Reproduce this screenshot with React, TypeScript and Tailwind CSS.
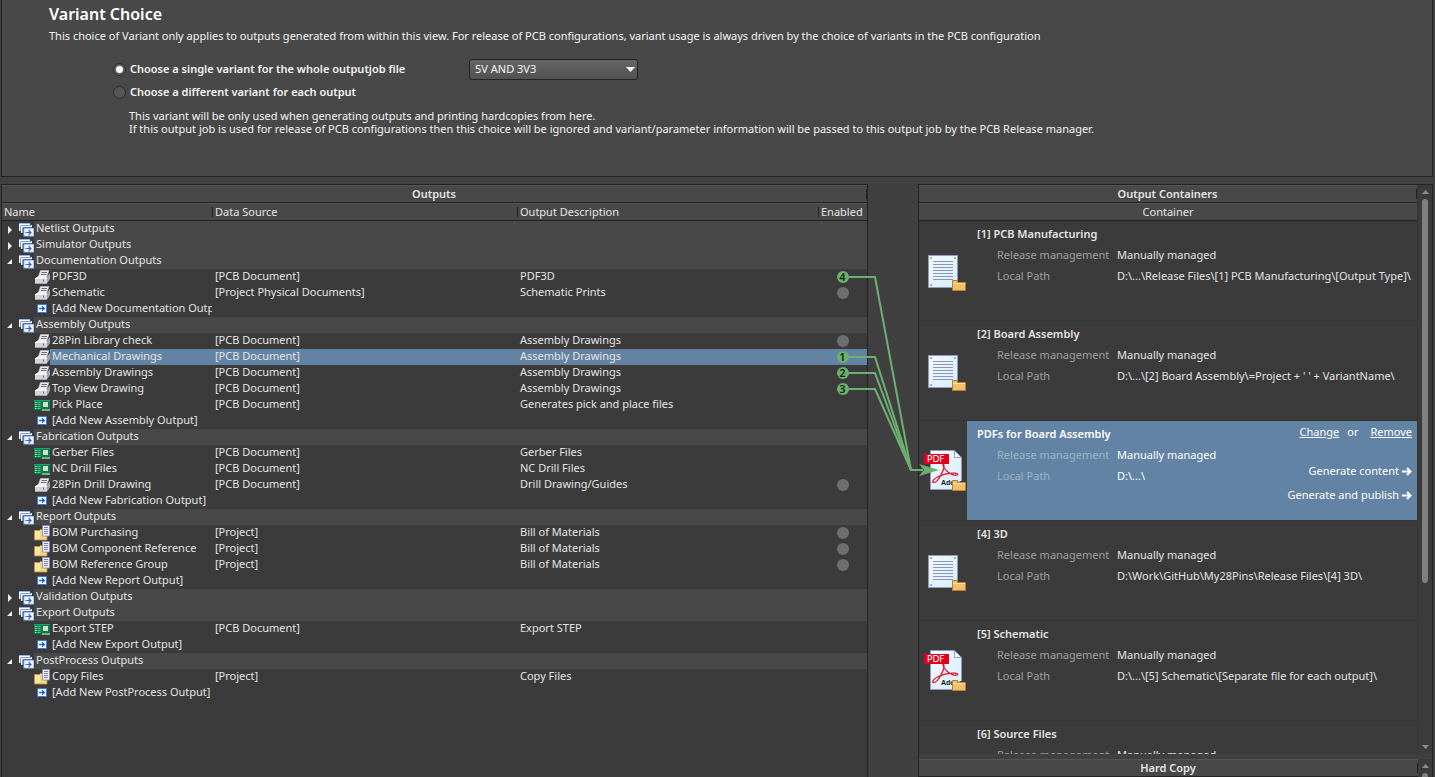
import { useState, type ReactNode } from "react";

type IconKind = "printer" | "board" | "report" | "add";

type OutputItem = {
  icon: IconKind;
  name: string;
  source?: string;
  description?: string;
  slot?: "idle" | 1 | 2 | 3 | 4;
  selected?: boolean;
};

type OutputGroup = { name: string; open: boolean; items: OutputItem[] };

const groups: OutputGroup[] = [
  { name: "Netlist Outputs", open: false, items: [] },
  { name: "Simulator Outputs", open: false, items: [] },
  {
    name: "Documentation Outputs",
    open: true,
    items: [
      { icon: "printer", name: "PDF3D", source: "[PCB Document]", description: "PDF3D", slot: 4 },
      { icon: "printer", name: "Schematic", source: "[Project Physical Documents]", description: "Schematic Prints", slot: "idle" },
      { icon: "add", name: "[Add New Documentation Output]" },
    ],
  },
  {
    name: "Assembly Outputs",
    open: true,
    items: [
      { icon: "printer", name: "28Pin Library check", source: "[PCB Document]", description: "Assembly Drawings", slot: "idle" },
      { icon: "printer", name: "Mechanical Drawings", source: "[PCB Document]", description: "Assembly Drawings", slot: 1, selected: true },
      { icon: "printer", name: "Assembly Drawings", source: "[PCB Document]", description: "Assembly Drawings", slot: 2 },
      { icon: "printer", name: "Top View Drawing", source: "[PCB Document]", description: "Assembly Drawings", slot: 3 },
      { icon: "board", name: "Pick Place", source: "[PCB Document]", description: "Generates pick and place files" },
      { icon: "add", name: "[Add New Assembly Output]" },
    ],
  },
  {
    name: "Fabrication Outputs",
    open: true,
    items: [
      { icon: "board", name: "Gerber Files", source: "[PCB Document]", description: "Gerber Files" },
      { icon: "board", name: "NC Drill Files", source: "[PCB Document]", description: "NC Drill Files" },
      { icon: "printer", name: "28Pin Drill Drawing", source: "[PCB Document]", description: "Drill Drawing/Guides", slot: "idle" },
      { icon: "add", name: "[Add New Fabrication Output]" },
    ],
  },
  {
    name: "Report Outputs",
    open: true,
    items: [
      { icon: "report", name: "BOM Purchasing", source: "[Project]", description: "Bill of Materials", slot: "idle" },
      { icon: "report", name: "BOM Component Reference", source: "[Project]", description: "Bill of Materials", slot: "idle" },
      { icon: "report", name: "BOM Reference Group", source: "[Project]", description: "Bill of Materials", slot: "idle" },
      { icon: "add", name: "[Add New Report Output]" },
    ],
  },
  { name: "Validation Outputs", open: false, items: [] },
  {
    name: "Export Outputs",
    open: true,
    items: [
      { icon: "board", name: "Export STEP", source: "[PCB Document]", description: "Export STEP" },
      { icon: "add", name: "[Add New Export Output]" },
    ],
  },
  {
    name: "PostProcess Outputs",
    open: true,
    items: [
      { icon: "report", name: "Copy Files", source: "[Project]", description: "Copy Files" },
      { icon: "add", name: "[Add New PostProcess Output]" },
    ],
  },
];

type Container = { title: string; path: string; kind: "folder" | "pdf"; selected?: boolean };

const containers: Container[] = [
  { title: "[1] PCB Manufacturing", path: "D:\\...\\Release Files\\[1] PCB Manufacturing\\[Output Type]\\", kind: "folder" },
  { title: "[2] Board Assembly", path: "D:\\...\\[2] Board Assembly\\=Project + ' ' + VariantName\\", kind: "folder" },
  { title: "PDFs for Board Assembly", path: "D:\\...\\", kind: "pdf", selected: true },
  { title: "[4] 3D", path: "D:\\Work\\GitHub\\My28Pins\\Release Files\\[4] 3D\\", kind: "folder" },
  { title: "[5] Schematic", path: "D:\\...\\[5] Schematic\\[Separate file for each output]\\", kind: "pdf" },
  { title: "[6] Source Files", path: "D:\\...\\", kind: "folder" },
];

function ExpandArrow({ open }: { open: boolean }) {
  return (
    <svg width="16" height="16" viewBox="0 0 16 16" className="block" fill="#f0f0f0" aria-hidden="true">
      {open ? <path d="M10 6v5H5z" /> : <path d="M6 5l4 4-4 4z" />}
    </svg>
  );
}

function GroupIcon() {
  return (
    <svg width="16" height="16" viewBox="0 0 16 16" className="block shrink-0" aria-hidden="true">
      <path d="M1 2h11v2H3v6H1z" fill="#fff" />
      <path d="M1 2.500h11" stroke="#8fb0f0" />
      <path d="M3 4h11v2H5v6H3z" fill="#fff" />
      <path d="M2.500 4.500V10M3 4.500h10" fill="none" stroke="#4a7ddc" strokeWidth=".8" />
      <path d="M4.500 6.500V12M5 6.500h9" fill="none" stroke="#4a7ddc" strokeWidth=".8" />
      <rect x="6" y="7.500" width="9.500" height="7.500" fill="#fff" stroke="#9dbaf3" />
      <path d="M7.500 11.500h5.500M10.500 9l2.500 2.500L10.500 14" fill="none" stroke="#2a66d8" strokeWidth="1.200" />
    </svg>
  );
}

function ItemIcon({ kind }: { kind: IconKind }) {
  return (
    <svg width="16" height="16" viewBox="0 0 16 16" className="block shrink-0" aria-hidden="true">
      {kind === "printer" && (
        <>
          <path d="M12 9l4-5v6l-3 4.500h-1z" fill="#a3a5b3" />
          <path d="M6.500 1.500H15L12.500 8.500H4z" fill="#e9e9ef" stroke="#c4c5cf" strokeWidth=".5" />
          <path d="M7.500 3.500h5.500M7 5.500h5.500" stroke="#6f717d" />
          <path d="M1 9.500L3.500 7.500H13l-1 2z" fill="#f6f6fa" />
          <rect x="1" y="9" width="12" height="5.500" fill="#d3d4df" />
          <path d="M1 9.500h12" stroke="#f8f8fc" />
          <path d="M1 14.500h12" stroke="#a2a4b4" />
          <path d="M9.500 10.500v2" stroke="#5e6070" />
        </>
      )}
      {kind === "board" && (
        <>
          <path d="M0 3h16v11H7v-1H0z" fill="#0b7a4e" />
          <path d="M0 3.500h16" stroke="#22a36f" />
          <path d="M1 5.500h1.500M1 7.500h1.500M1 9.500h1.500M1 11.500h1.500" stroke="#c9f2d9" />
          <path d="M3.500 5.500h3M3.500 7.500h3M3.500 9.500h3M3.500 11.500h3" stroke="#4fd08d" />
          <rect x="9" y="5" width="5" height="5" fill="#d7ded8" />
          <path d="M8.500 13h1M10.500 13h1M12.500 13h1M14.500 13h1" stroke="#f3e9a0" strokeWidth="2" />
        </>
      )}
      {kind === "report" && (
        <>
          <path d="M.500 5.500h5l1-1h6.500v10.500H.5z" fill="#f2d586" stroke="#b99a4c" strokeWidth=".8" />
          <path d="M1 6h5v8H1z" fill="#fae6a4" />
          <rect x="8.500" y=".5" width="7" height="10.500" fill="#eef0fb" stroke="#8388b0" strokeWidth=".8" />
          <path d="M10 2.500h4M10 4.500h4M10 6.500h4M10 8.500h4" stroke="#6c74b0" strokeWidth=".9" />
        </>
      )}
      {kind === "add" && (
        <>
          <rect x="3.500" y="3.500" width="9" height="8" fill="#fff" stroke="#2f78e0" />
          <path d="M5 7.500h4.500M8 5.200l2.500 2.300L8 9.800" fill="none" stroke="#1f62d0" strokeWidth="1.300" />
        </>
      )}
    </svg>
  );
}

function SmallFolder() {
  return (
    <g transform="translate(33 33)">
      <path d="M.5 10.500V.5h5V2.500h8v8z" fill="#f2bf6c" stroke="#b9802a" />
      <path d="M1 3.500h12" stroke="#ffe2ab" />
    </g>
  );
}

function ContainerIcon({ kind }: { kind: Container["kind"] }) {
  return (
    <svg width="48" height="48" viewBox="0 0 48 48" className="block" aria-hidden="true">
      <defs>
        <linearGradient id="sheet" x1="0" y1="0" x2="1" y2="1">
          <stop offset="0" stopColor="#f6f8fd" />
          <stop offset="1" stopColor="#d5effb" />
        </linearGradient>
      </defs>
      {kind === "folder" ? (
        <>
          <rect x="9.500" y="8.500" width="29" height="32" fill="url(#sheet)" stroke="#8f9bc4" />
          <path d="M11 10h2v2h-2zM35 10h2v2h-2zM11 37h2v2h-2z" fill="#a3abcf" />
          <path d="M14 14.500h20M14 17.500h20M14 20.500h20M14 23.500h20M14 26.500h20M14 29.500h20M14 32.500h20" stroke="#8b95c0" />
          <SmallFolder />
        </>
      ) : (
        <>
          <path d="M11.500 3.500h24l7 7v32h-31z" fill="url(#sheet)" stroke="#8f9bc4" />
          <path d="M35.500 3.500v7h7z" fill="#fff" stroke="#8f9bc4" />
          <path
            d="M24.500 17c1.200 1.500.4 5-2 10-2.500 5-6 9-8.200 8.500-2-.8.700-3.800 4.700-5.800 5-2.500 12-3.900 17-3.600 3.500.3 3.500 2.200.5 2.200-4 0-9-3.300-11.500-7.800-1-1.800-1.500-3.200-.5-3.500z"
            fill="none"
            stroke="#e0102a"
            strokeWidth="1.200"
          />
          <text x="22" y="38" fontSize="7" fontWeight="700" fill="#111" fontFamily="'Liberation Sans Narrow', 'Liberation Sans', sans-serif">Adobe</text>
          <rect x="5" y="7" width="25" height="10" fill="#e3001b" />
          <text x="8" y="15" fontSize="9" fill="#fff" fontFamily="'DejaVu Sans', sans-serif">PDF</text>
          <SmallFolder />
        </>
      )}
    </svg>
  );
}

function SlotMark({ slot }: { slot: NonNullable<OutputItem["slot"]> }) {
  return slot === "idle" ? (
    <span className="block size-3 rounded-full bg-[#6e6e6e]" />
  ) : (
    <span className="flex size-3 items-center justify-center rounded-full bg-[#6db070] leading-3 font-semibold text-[#142814]">{slot}</span>
  );
}

function HeaderBar({ children }: { children: ReactNode }) {
  return (
    <div className="flex h-[18px] shrink-0 items-center border-t border-b border-t-[#555] border-b-[#232323] bg-[#484848]">
      <h2 className="flex-1 text-center leading-4 font-semibold">{children}</h2>
      <span className="h-[10px] border-l border-[#232323]" />
    </div>
  );
}

function OutputsPanel() {
  return (
    <section className="flex min-w-0 flex-1 flex-col overflow-hidden border-x border-t border-[#232323] bg-[#3b3b3b]">
      <HeaderBar>Outputs</HeaderBar>
      <table className="w-full table-fixed border-collapse text-left whitespace-nowrap">
        <colgroup>
          <col className="w-[210px]" />
          <col className="w-[305px]" />
          <col />
          <col className="w-[49px]" />
        </colgroup>
        <thead className="bg-[#484848] leading-4 [&_th]:p-0 [&_th]:font-normal">
          <tr>
            {["Name", "Data Source", "Output Description", "Enabled"].map((label, i) => (
              <th key={label} scope="col">
                <div className="flex h-[18px] items-center border-t border-b border-t-[#555] border-b-[#232323]">
                  <span className={i === 0 ? "pl-[2px]" : "h-[10px] border-l border-[#232323] pl-[2px] leading-[10px]"}>{label}</span>
                </div>
              </th>
            ))}
          </tr>
        </thead>
        {groups.map((group) => (
          <tbody key={group.name} className="leading-[14px] [&_td]:p-0">
            <tr>
              <td colSpan={4}>
                <div className="flex h-4">
                  <button type="button" aria-label={group.name} aria-expanded={group.open} className="w-4">
                    <ExpandArrow open={group.open} />
                  </button>
                  <GroupIcon />
                  <span className="flex-1 bg-[#484848] pl-[2px]">{group.name}</span>
                </div>
              </td>
            </tr>
            {group.items.map((item) => (
              <tr key={item.name}>
                <td>
                  <div className="flex h-4 overflow-hidden pl-8">
                    <ItemIcon kind={item.icon} />
                    <span className={item.selected ? "flex-1 bg-[#6283a3] pl-[2px]" : "pl-[2px]"}>{item.name}</span>
                  </div>
                </td>
                <td className={item.selected ? "bg-[#6283a3]" : ""}>
                  <div className="h-4 pl-[3px]">{item.source}</div>
                </td>
                <td className={item.selected ? "bg-[#6283a3]" : ""}>
                  <div className={item.selected ? "h-4 pl-[3px] outline-1 -outline-offset-1 outline-[#857b7d] outline-dotted" : "h-4 pl-[3px]"}>
                    {item.description}
                  </div>
                </td>
                <td className={item.selected ? "bg-[#6283a3]" : ""}>
                  <div className="flex h-4 items-center justify-center">{item.slot && <SlotMark slot={item.slot} />}</div>
                </td>
              </tr>
            ))}
          </tbody>
        ))}
      </table>
    </section>
  );
}

function Links() {
  return (
    <div className="relative w-[50px] shrink-0">
      <svg width="94" height="300" viewBox="0 0 94 300" className="absolute top-0 -left-[22px]" aria-hidden="true">
        <g fill="none" stroke="#6db070" strokeWidth="2">
          <path d="M3 93h26l36 193h12" />
          <path d="M3 173h26l36 113" />
          <path d="M3 189h26l36 97" />
          <path d="M3 205h26l36 81" />
        </g>
        <path d="M73 280l20 6-20 6 5-6z" fill="#6db070" />
      </svg>
    </div>
  );
}

function ContainerRow({ item }: { item: Container }) {
  const label = item.selected ? "text-[#9db3c8]" : "text-[#a0a0a0]";
  return (
    <li className="flex h-[100px] border-b border-[#353535]">
      <div className="w-12 shrink-0 pt-[26px]">
        <ContainerIcon kind={item.kind} />
      </div>
      <div className={item.selected ? "flex min-w-0 flex-1 bg-[#6283a3] pr-[5px] pl-[10px] text-white" : "flex min-w-0 flex-1 pr-[5px] pl-[10px]"}>
        <div className="flex-1 pt-[2px] leading-[21px] whitespace-nowrap">
          <h3 className="font-semibold">{item.title}</h3>
          <dl className="grid grid-cols-[120px_1fr] pl-5">
            <dt className={label}>Release management</dt>
            <dd>Manually managed</dd>
            <dt className={label}>Local Path</dt>
            <dd>{item.path}</dd>
          </dl>
        </div>
        {item.selected && (
          <div className="flex flex-col items-end text-white">
            <div className="flex gap-2 pt-[3px] leading-4">
              <a href="#change" className="underline">Change</a>
              <span className="pr-1">or</span>
              <a href="#remove" className="underline">Remove</a>
            </div>
            <div className="flex flex-col items-end gap-2 pt-[23px] leading-4">
              {["Generate content", "Generate and publish"].map((action) => (
                <button key={action} type="button" className="flex items-center gap-[3px]">
                  {action}
                  <svg width="10" height="9" viewBox="0 0 10 9" fill="none" stroke="#fff" strokeWidth="2" aria-hidden="true">
                    <path d="M0 4.500h8M5 1l3.500 3.500L5 8" />
                  </svg>
                </button>
              ))}
            </div>
          </div>
        )}
      </div>
    </li>
  );
}

function UpArrow() {
  return (
    <svg width="7" height="4" viewBox="0 0 7 4" className="block shrink-0" fill="#8c8c8c" aria-hidden="true">
      <path d="M3.500 0L7 4H0z" />
    </svg>
  );
}

function ContainersPanel() {
  return (
    <section className="flex w-[515px] shrink-0 flex-col border-x border-t border-[#232323] bg-[#3b3b3b]">
      <div className="flex min-h-0 flex-1">
        <div className="flex min-w-0 flex-1 flex-col overflow-hidden border-r border-[#353535]">
          <HeaderBar>Output Containers</HeaderBar>
          <div className="h-[18px] shrink-0 border-t border-b border-t-[#555] border-b-[#232323] bg-[#484848] text-center leading-4">Container</div>
          <ul className="min-h-0 flex-1 overflow-hidden">
            {containers.map((item) => (
              <ContainerRow key={item.title} item={item} />
            ))}
          </ul>
        </div>
        <div className="flex w-[14px] flex-col items-center py-[5px]">
          <UpArrow />
          <div className="flex w-full flex-1 flex-col items-center py-[5px]">
            <div className="h-[71%] w-[6px] rounded-full bg-[#808080]" />
          </div>
          <div className="rotate-180">
            <UpArrow />
          </div>
        </div>
      </div>
      <div className="flex h-[23px] shrink-0 border-t-5 border-[#404040]">
        <div className="flex-1">
          <HeaderBar>Hard Copy</HeaderBar>
        </div>
        <div className="flex w-[14px] flex-col items-center gap-[5px] overflow-hidden pt-[5px]">
          <UpArrow />
          <div className="h-3 w-[6px] shrink-0 rounded-full bg-[#808080]" />
        </div>
      </div>
    </section>
  );
}

export default function App() {
  const [mode, setMode] = useState("single");
  const radio =
    "size-[13px] appearance-none rounded-full border border-[#2a2a2a] bg-[#555] checked:bg-[radial-gradient(circle,#fff_3px,#606060_4px)]";
  return (
    <div className="flex h-screen flex-col gap-[7px] overflow-hidden bg-[#404040] pr-[2px] pl-px font-['Noto_Sans',sans-serif] text-[11px] text-[#e4e4e4]">
      <section className="h-[177px] shrink-0 border-x border-b border-[#232323] bg-[#484848] pt-1 pl-[47px] text-[#f4f4f4]">
        <h1 className="text-[16px] leading-5 font-semibold text-white">Variant Choice</h1>
        <p className="pt-1 leading-4 whitespace-nowrap">
          This choice of Variant only applies to outputs generated from within this view. For release of PCB configurations, variant usage is always driven by the choice of variants in the PCB configuration
        </p>
        <div className="flex pt-[14px] pl-16">
          <div className="flex w-[356px] flex-col font-semibold">
            <label className="flex h-[23px] items-center gap-1">
              <input type="radio" name="variant" className={radio} checked={mode === "single"} onChange={() => setMode("single")} />
              Choose a single variant for the whole outputjob file
            </label>
            <label className="flex h-[23px] items-center gap-1">
              <input type="radio" name="variant" className={radio} checked={mode === "each"} onChange={() => setMode("each")} />
              Choose a different variant for each output
            </label>
          </div>
          <div className="relative mt-px h-[21px] w-[169px]">
            <select
              aria-label="Variant"
              className="size-full appearance-none rounded-[3px] border border-[#232323] bg-linear-to-b from-[#666] to-[#525252] pl-[5px] text-[#f4f4f4]"
            >
              <option>5V AND 3V3</option>
            </select>
            <svg width="9" height="5" viewBox="0 0 9 5" className="pointer-events-none absolute top-2 right-[3px]" fill="#fff" aria-hidden="true">
              <path d="M0 0h9L4.500 5z" />
            </svg>
          </div>
        </div>
        <p className="pt-[5px] pl-[80px] leading-[13px] whitespace-nowrap">
          This variant will be only used when generating outputs and printing hardcopies from here.
          <br />
          If this output job is used for release of PCB configurations then this choice will be ignored and variant/parameter information will be passed to this output job by the PCB Release manager.
        </p>
      </section>
      <main className="flex min-h-0 flex-1">
        <OutputsPanel />
        <Links />
        <ContainersPanel />
      </main>
    </div>
  );
}
